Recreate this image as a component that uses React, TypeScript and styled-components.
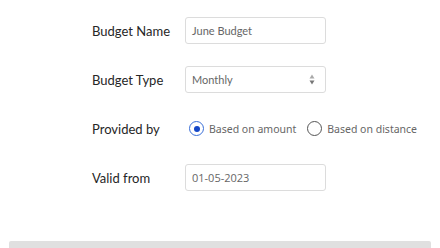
import React from "react";
import styled, { createGlobalStyle } from "styled-components";

const Global = createGlobalStyle`
  html, body { margin: 0; padding: 0; background: #fff; }
  body { font-family: Lato, "Noto Sans", sans-serif; overflow: hidden; }
`;

const Page = styled.div`
  width: 440px;
  height: 248px;
  display: flex;
  flex-direction: column;
`;

const Form = styled.div`
  display: grid;
  grid-template-columns: 93px auto;
  grid-auto-rows: 27px;
  row-gap: 22px;
  padding: 17px 0 0 92px;
  align-items: center;
`;

const Label = styled.div`
  font-family: Lato, sans-serif;
  font-size: 13px;
  color: #262626;
`;

const Field = styled.div<{ $mono?: boolean }>`
  width: 141px;
  height: 27px;
  box-sizing: border-box;
  border: 1px solid #dcdcdc;
  border-radius: 3px;
  display: flex;
  align-items: center;
  justify-content: space-between;
  padding: 0 10px 0 6px;
  font-family: ${(p) => (p.$mono ? '"Open Sans", sans-serif' : "Lato, sans-serif")};
  font-size: 11px;
  color: #666;
`;

const Arrows = styled.svg`
  width: 6px;
  height: 11px;
`;

const RadioGroup = styled.div`
  display: flex;
  align-items: center;
  gap: 11px;
  margin-left: 4px;
`;

const RadioItem = styled.label`
  display: flex;
  align-items: center;
  gap: 5px;
  font-family: "Noto Sans", sans-serif;
  font-size: 10.5px;
  color: #666;
`;

const Circle = styled.span<{ $on?: boolean }>`
  width: 15px;
  height: 15px;
  box-sizing: border-box;
  border-radius: 50%;
  border: 1px solid ${(p) => (p.$on ? "#3a6fd8" : "#555")};
  display: flex;
  align-items: center;
  justify-content: center;
  &::after {
    content: "";
    width: 6px;
    height: 6px;
    border-radius: 50%;
    background: ${(p) => (p.$on ? "#1447c8" : "transparent")};
  }
`;

const Spacer = styled.div`
  flex: 1;
`;

const Footer = styled.div`
  height: 7px;
  margin: 0 9px;
  background: #e0e0e0;
  border-radius: 2px 2px 0 0;
`;

export default function App() {
  return (
    <Page>
      <Global />
      <Form>
        <Label>Budget Name</Label>
        <Field>June Budget</Field>
        <Label>Budget Type</Label>
        <Field>
          Monthly
          <Arrows viewBox="0 0 6 11">
            <path d="M3 0.5 L5.5 4.5 H0.5 Z" fill="#aaa" />
            <path d="M3 10.5 L5.5 6.5 H0.5 Z" fill="#777" />
          </Arrows>
        </Field>
        <Label>Provided by</Label>
        <RadioGroup>
          <RadioItem>
            <Circle $on />
            Based on amount
          </RadioItem>
          <RadioItem>
            <Circle />
            Based on distance
          </RadioItem>
        </RadioGroup>
        <Label>Valid from</Label>
        <Field $mono>01-05-2023</Field>
      </Form>
      <Spacer />
      <Footer />
    </Page>
  );
}
